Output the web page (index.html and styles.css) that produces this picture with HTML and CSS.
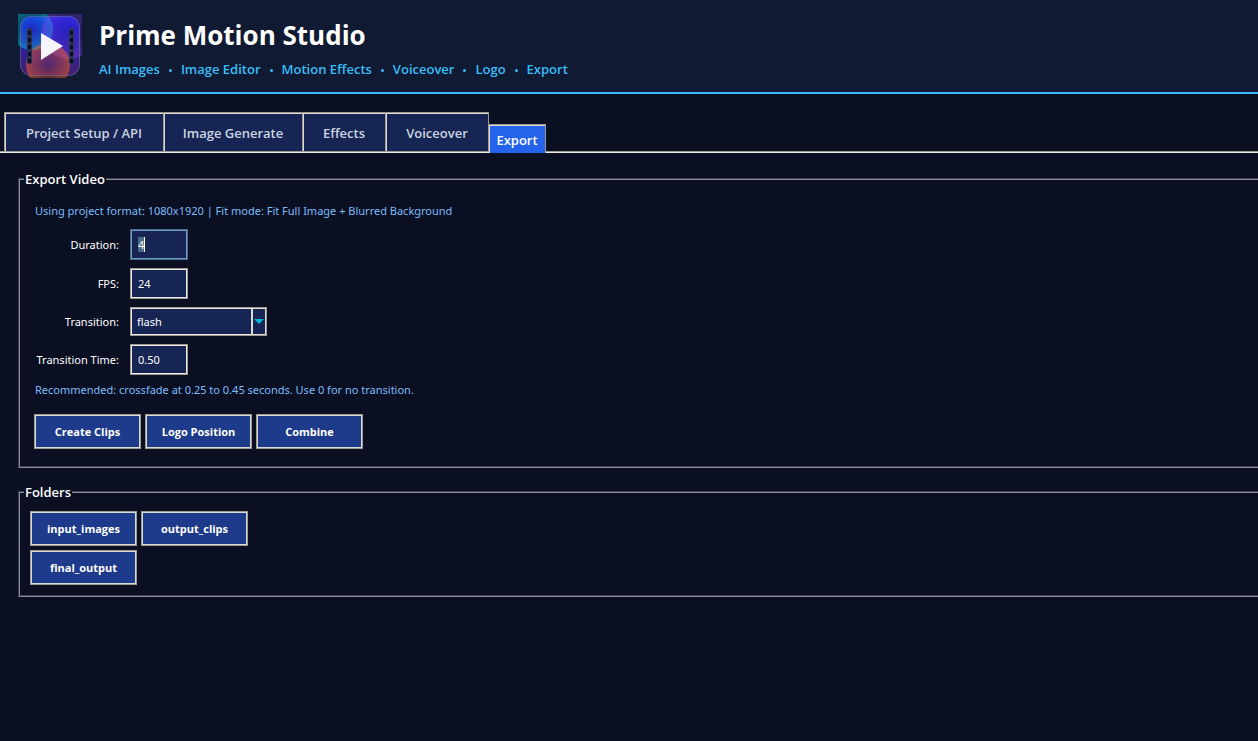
FILE: index.html
```
<!DOCTYPE html>
<html lang="en">
<head>
  <meta charset="UTF-8">
  <meta name="viewport" content="width=device-width, initial-scale=1.0">
  <title>Prime Motion Studio</title>
  <link rel="stylesheet" href="styles.css">
</head>
<body>
  <header class="app-header">
    <svg class="logo" viewBox="0 0 64 64" aria-hidden="true">
      <defs>
        <linearGradient id="tile" x1="0" y1="0" x2="0" y2="1">
          <stop offset="0" stop-color="#1a22d8"/>
          <stop offset="0.5" stop-color="#2a1fa0"/>
          <stop offset="1" stop-color="#43206e"/>
        </linearGradient>
        <radialGradient id="teal">
          <stop offset="0" stop-color="#00a0f0" stop-opacity="0.05"/>
          <stop offset="1" stop-color="#00c8dc" stop-opacity="0.5"/>
        </radialGradient>
        <radialGradient id="violet">
          <stop offset="0" stop-color="#5a30f0" stop-opacity="0.08"/>
          <stop offset="1" stop-color="#8a40f0" stop-opacity="0.42"/>
        </radialGradient>
        <radialGradient id="orange">
          <stop offset="0" stop-color="#e0501c" stop-opacity="0.15"/>
          <stop offset="1" stop-color="#f0601c" stop-opacity="0.55"/>
        </radialGradient>
        <clipPath id="frame"><rect width="64" height="64"/></clipPath>
      </defs>
      <g clip-path="url(#frame)">
        <rect x="2" y="2" width="60" height="60" rx="11" fill="url(#tile)"/>
        <circle cx="14" cy="15" r="21" fill="url(#teal)"/>
        <circle cx="51" cy="18" r="27" fill="url(#violet)"/>
        <circle cx="30" cy="51" r="22" fill="url(#orange)"/>
        <rect x="2.5" y="2.5" width="59" height="59" rx="11" fill="none" stroke="#6a7090" stroke-opacity="0.6"/>
      </g>
      <rect x="9" y="14" width="5" height="36" rx="2" fill="#2c3252"/>
      <rect x="51" y="14" width="5" height="36" rx="2" fill="#2c3252"/>
      <path d="M11.5 17v32M53.5 17v32" stroke="#0a0e20" stroke-width="3" stroke-dasharray="4 3"/>
      <path d="M23 19v27l22-14z" fill="#f4f4fa"/>
    </svg>
    <div>
      <h1>Prime Motion Studio</h1>
      <p class="features">
        <span>AI Images</span><i></i><span>Image Editor</span><i></i><span>Motion Effects</span><i></i><span>Voiceover</span><i></i><span>Logo</span><i></i><span>Export</span>
      </p>
    </div>
  </header>

  <nav class="tabs">
    <button class="tab tab-setup" type="button">Project Setup / API</button>
    <button class="tab tab-images" type="button">Image Generate</button>
    <button class="tab tab-effects" type="button">Effects</button>
    <button class="tab tab-voice" type="button">Voiceover</button>
    <button class="tab active" type="button">Export</button>
  </nav>

  <main>
    <fieldset class="export-video">
      <legend>Export Video</legend>
      <p class="hint">Using project format: 1080x1920 | Fit mode: Fit Full Image + Blurred Background</p>
      <div class="form-grid">
        <label for="duration">Duration:</label>
        <span class="field"><input class="focused" type="text" id="duration" value="4"></span>
        <label for="fps">FPS:</label>
        <input type="text" id="fps" value="24">
        <label for="transition">Transition:</label>
        <span class="combo">
          <select id="transition">
            <option>flash</option>
            <option>crossfade</option>
          </select>
          <span class="arrow"></span>
        </span>
        <label for="transition-time">Transition Time:</label>
        <input type="text" id="transition-time" value="0.50">
      </div>
      <p class="hint">Recommended: crossfade at 0.25 to 0.45 seconds. Use 0 for no transition.</p>
      <div class="buttons">
        <button class="btn" type="button">Create Clips</button>
        <button class="btn" type="button">Logo Position</button>
        <button class="btn" type="button">Combine</button>
      </div>
    </fieldset>

    <fieldset class="folders">
      <legend>Folders</legend>
      <div class="folder-grid">
        <button class="btn" type="button">input_images</button>
        <button class="btn" type="button">output_clips</button>
        <button class="btn" type="button">final_output</button>
      </div>
    </fieldset>
  </main>

  <script>
    const duration = document.getElementById('duration');
    duration.focus();
    duration.select();
  </script>
</body>
</html>
```
FILE: styles.css
```
* {
  box-sizing: border-box;
}

body {
  margin: 0;
  background-color: #0a0f22;
  color: white;
  font-family: "Noto Sans", "Open Sans", sans-serif;
  font-size: 11px;
  line-height: 16px;
}

h1, p {
  margin: 0;
}

button, input, select {
  font: inherit;
  color: inherit;
}

.app-header {
  display: flex;
  gap: 17px;
  padding: 14px 18px;
  background-color: #111a33;
  border-bottom: 2px solid #38bdf8;
}

.logo {
  width: 64px;
  height: 64px;
}

h1 {
  margin-top: 3px;
  font-family: "Open Sans", sans-serif;
  font-size: 26px;
  line-height: 36px;
}

.features, .tab, legend {
  font-family: "Open Sans", sans-serif;
  font-size: 13px;
  font-weight: 600;
  line-height: 18px;
}

.features {
  display: flex;
  align-items: center;
  margin-top: 7px;
  color: #38bdf8;
}

.features i {
  width: 3px;
  height: 3px;
  margin: 3px 9px 0;
  border-radius: 50%;
  background-color: #38bdf8;
}

.tabs {
  display: flex;
  align-items: flex-end;
  margin-top: 18px;
  padding-left: 4px;
  border-bottom: 1px solid #eeebe7;
  box-shadow: inset 0 -1px #9e9a91;
}

.tab {
  height: 40px;
  padding: 2px 0 0;
  border: 1px solid #9e9a91;
  border-right: 0;
  background-color: #172554;
  box-shadow: inset 1px 1px #dcdad5;
  color: #cbd5e1;
}

.tab-setup {
  width: 159px;
}

.tab-images {
  width: 139px;
}

.tab-effects {
  width: 83px;
}

.tab-voice {
  width: 104px;
  border-right: 1px solid #9e9a91;
}

.tab.active {
  width: 57px;
  height: 29px;
  margin-bottom: -1px;
  border-left: 0;
  border-right: 1px solid #9e9a91;
  border-bottom: 0;
  background-color: #2563eb;
  color: white;
}

main {
  padding: 17px 0 0 18px;
}

fieldset {
  min-width: 0;
  margin: 0 0 15px;
  border: 2px groove #8a8f9c;
  border-right: 0;
}

legend {
  padding: 0 1px;
}

.export-video {
  padding: 15px 14px 17px;
}

.export-video legend {
  margin-left: -10px;
}

.folders {
  padding: 10px;
}

.folders legend {
  margin-left: -6px;
}

.hint {
  padding-left: 1px;
  color: #7dbdfa;
}

.form-grid {
  display: grid;
  grid-template-columns: 85px max-content;
  align-items: center;
  gap: 8px 11px;
  margin: 10px 0 7px;
}

.form-grid label {
  text-align: right;
  white-space: nowrap;
}

input {
  width: 58px;
  height: 31px;
  padding: 0 7px;
  border: 1px solid #9e9a91;
  border-radius: 0;
  outline: 0;
  background-color: #172554;
  box-shadow: inset 0 0 0 1px #eeebe7;
}

.focused {
  border-color: #4a6984;
  box-shadow: inset 0 0 0 1px #6f9dc6;
}

input::selection {
  background-color: #4a6984;
  color: white;
}

.field {
  position: relative;
  display: flex;
}

/* text cursor after the selected value */
.field::after {
  content: "";
  position: absolute;
  top: 8px;
  left: 14px;
  width: 1px;
  height: 15px;
  background-color: white;
}

.combo {
  position: relative;
  display: flex;
  width: 137px;
}

select {
  width: 100%;
  height: 29px;
  padding: 0 6px;
  appearance: none;
  border: 1px solid #9e9a91;
  border-radius: 0;
  background-color: #172554;
  box-shadow: inset 0 0 0 1px #eeebe7;
}

.arrow {
  position: absolute;
  top: 1px;
  right: 1px;
  bottom: 1px;
  width: 15px;
  border: 1px solid #dcdad5;
  border-left: 2px solid #dcdad5;
  pointer-events: none;
}

.arrow::after {
  content: "";
  position: absolute;
  top: 10px;
  left: 1px;
  border: 5px solid transparent;
  border-top-color: #06b6d4;
  border-bottom: 0;
}

.buttons {
  display: flex;
  gap: 4px;
  margin-top: 16px;
}

.btn {
  width: 107px;
  height: 35px;
  padding: 0;
  border: 1px solid #9e9a91;
  background-color: #1e3a8a;
  box-shadow: inset 0 0 0 1px #dcdad5;
  font-family: "Open Sans", sans-serif;
  font-weight: bold;
}

.folder-grid {
  display: grid;
  grid-template-columns: max-content max-content;
  gap: 4px;
}
```
